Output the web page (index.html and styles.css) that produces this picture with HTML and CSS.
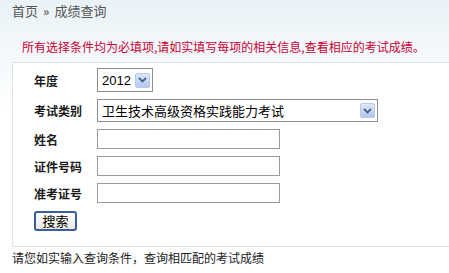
FILE: index.html
```html
<!DOCTYPE html>
<html lang="zh">
<head>
<meta charset="utf-8">
<link rel="stylesheet" href="styles.css">
</head>
<body>
<div class="page">
  <div class="crumb">首页<span class="sep">»</span>成绩查询</div>
  <div class="notice">所有选择条件均为必填项,请如实填写每项的相关信息,查看相应的考试成绩。</div>
  <div class="box">
    <div class="row">
      <span class="label">年度</span>
      <div class="select year"><span class="val">2012</span><span class="arrow"><svg width="9" height="6" viewBox="0 0 9 6"><path d="M1 1 L4.5 4.5 L8 1" fill="none" stroke="#4d6185" stroke-width="1.8"/></svg></span></div>
    </div>
    <div class="row">
      <span class="label">考试类别</span>
      <div class="select type"><span class="val">卫生技术高级资格实践能力考试</span><span class="arrow"><svg width="9" height="6" viewBox="0 0 9 6"><path d="M1 1 L4.5 4.5 L8 1" fill="none" stroke="#4d6185" stroke-width="1.8"/></svg></span></div>
    </div>
    <div class="row">
      <span class="label">姓名</span>
      <div class="input"></div>
    </div>
    <div class="row r4">
      <span class="label">证件号码</span>
      <div class="input"></div>
    </div>
    <div class="row">
      <span class="label">准考证号</span>
      <div class="input"></div>
    </div>
    <div class="btnrow"><span class="btn">搜索</span></div>
  </div>
  <div class="foot">请您如实输入查询条件，查询相匹配的考试成绩</div>
</div>
</body>
</html>
```
FILE: styles.css
```css
html, body { margin: 0; padding: 0; }
body {
  width: 449px; height: 273px; overflow: hidden;
  background: linear-gradient(to bottom, #e9f2f7 0px, #f5f9fb 60px, #ffffff 110px);
  font-family: "Noto Sans CJK SC", "Liberation Sans", sans-serif;
  font-size: 12px;
  color: #000;
}
.page { padding: 2px 0 0 12px; }
.crumb { color: #555; height: 17px; line-height: 17px; font-size: 13px; }
.crumb .sep { color: #666; font-size: 12px; font-weight: bold; margin: 0 5px; }
.notice { color: #cc0033; margin: 20px 0 0 10px; line-height: 16px; height: 16px; }
.box {
  margin-top: 7px;
  border: 1px solid #e2e5e8;
  border-right: none;
  background: #fff;
  padding: 5px 0 13px 21px;
  height: 165px;
}
.row { display: flex; align-items: center; margin-bottom: 7px; }
.row.r4 { margin-top: 1px; }
.label { width: 63px; font-weight: bold; color: #1a1a1a; }
.select {
  display: flex; align-items: center; justify-content: space-between;
  border: 1px solid #8e8e8e; background: #fff;
  padding: 0 2px 0 4px; font-size: 13px;
}
.select .val { font-family: "Liberation Sans", "Noto Sans CJK SC", sans-serif; }
.type .val { font-family: "Noto Sans CJK SC", sans-serif; font-size: 13px; }
.year { width: 48px; height: 22px; }
.type { width: 273px; height: 21px; }
.arrow {
  width: 15px; height: 15px; display: flex; align-items: center; justify-content: center;
  background: linear-gradient(#dce6fb, #b4c8f3); border: 1px solid #b8c8ea; border-radius: 2px; box-sizing: border-box;
}
.input { width: 181px; height: 18px; border: 1px solid #9a9a9a; background: #fff; }
.btnrow { padding-top: 1px; }
.btn {
  display: inline-block; width: 39px; height: 16px; line-height: 16px; text-align: center;
  border: 2px solid #3a5e9c; border-radius: 3px; font-size: 13px;
  background: linear-gradient(#ffffff, #e9e9e3);
}
.foot { margin-top: 3px; color: #222; line-height: 16px; }
```
